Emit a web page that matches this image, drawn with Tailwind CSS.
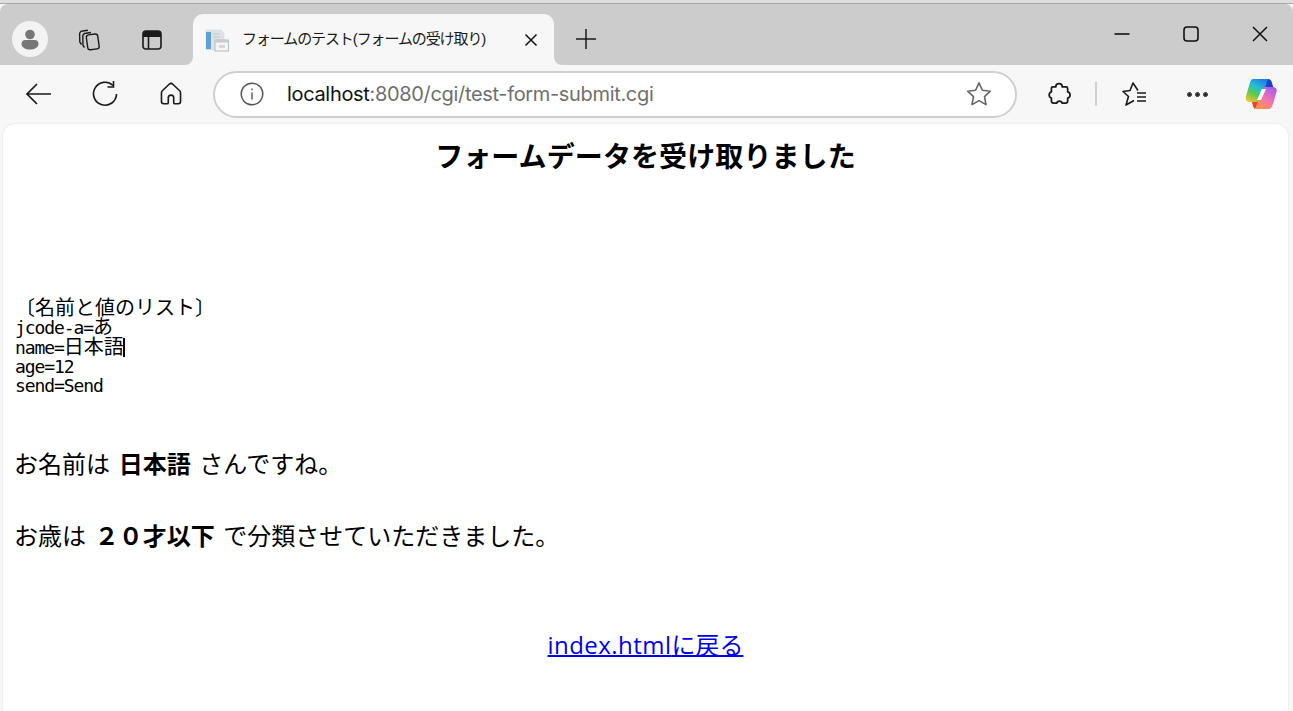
<!DOCTYPE html>
<html lang="ja">

<head>
    <meta charset="UTF-8">
    <title>フォームのテスト(フォームの受け取り)</title>
    <script src="https://cdn.jsdelivr.net/npm/@tailwindcss/browser@4"></script>
</head>

<body class="h-screen overflow-hidden bg-[#f7f7f7] font-['Liberation_Sans','Noto_Sans_CJK_JP',sans-serif]">
    <div class="flex h-[711px] flex-col">
        <!-- desktop sliver above the window -->
        <div class="h-[4px] border-b border-[#a8a8a8] bg-[#dedede]"></div>

        <!-- tab strip -->
        <div class="flex h-[61px] items-end rounded-t-[8px] bg-[#cccccc] pl-[12px]">
            <div class="mb-[8px] flex h-[36px] w-[36px] items-center justify-center rounded-full bg-[#f3f3f3]">
                <svg width="24" height="24" viewBox="0 0 24 24" fill="#777777">
                    <circle cx="12" cy="7.5" r="4.8" />
                    <path d="M3.5 17a4 4 0 0 1 4-4h9a4 4 0 0 1 4 4v0c0 3.500-4 5.500-8.500 5.500S3.500 20.500 3.500 17z" />
                </svg>
            </div>
            <div class="mb-[13px] ml-[29px] h-[24px] w-[24px]">
                <svg width="24" height="24" viewBox="0 0 24 24" fill="none" stroke="#1a1a1a" stroke-width="1.400">
                    <rect x="10" y="6.500" width="11.500" height="15" rx="2.500" transform="rotate(-8 15 14)" />
                    <path d="M7.500 19.500 6 17.500 5.800 8.500a3 3 0 0 1 3-3.200L14 4.500" />
                    <path d="M4.500 16.500 2.800 14 2.600 6a3 3 0 0 1 3-3L11 2.300" />
                </svg>
            </div>
            <div class="mb-[13px] ml-[39px] h-[24px] w-[24px]">
                <svg width="24" height="24" viewBox="0 0 24 24">
                    <rect x="3" y="3" width="18" height="18" rx="3" fill="none" stroke="#1a1a1a" stroke-width="1.600" />
                    <path d="M3 6a3 3 0 0 1 3-3h12a3 3 0 0 1 3 3v3H3z" fill="#1a1a1a" />
                    <path d="M8.500 8v13" stroke="#1a1a1a" stroke-width="1.600" />
                </svg>
            </div>

            <!-- active tab -->
            <div class="relative ml-[29px] flex h-[51px] w-[361px] items-center rounded-t-[10px] bg-[#f7f7f7] pl-[12px]">
                <svg class="absolute bottom-0 left-[-8px]" width="8" height="8" viewBox="0 0 8 8">
                    <path d="M8 0v8H0a8 8 0 0 0 8-8z" fill="#f7f7f7" />
                </svg>
                <svg class="absolute bottom-0 right-[-8px]" width="8" height="8" viewBox="0 0 8 8">
                    <path d="M0 0v8h8a8 8 0 0 1-8-8z" fill="#f7f7f7" />
                </svg>
                <svg width="24" height="24" viewBox="0 0 24 24">
                    <path d="M1 2h15l3 3v17H1z" fill="#dfe3e7" stroke="#cfd4d9" stroke-width="0.500" />
                    <rect x="1" y="4" width="5" height="17" fill="#5f9fd6" />
                    <path d="M8 6h7M8 9h7" stroke="#c3c9cf" />
                    <rect x="10" y="12" width="13.500" height="11" fill="#f4f5f6" stroke="#b5bcc2" />
                    <rect x="10" y="12" width="13.500" height="2.500" fill="#c5cbd0" />
                    <rect x="14" y="17" width="6" height="3" fill="#d2d7db" />
                </svg>
                <span class="ml-[13px] whitespace-nowrap text-[15px] tracking-[-1.1px] text-[#1a1a1a]">フォームのテスト(フォームの受け取り)</span>
                <svg class="ml-auto mr-[15px]" width="16" height="16" viewBox="0 0 16 16" stroke="#111111" stroke-width="1.500">
                    <path d="M2.500 2.500l11 11M13.500 2.500l-11 11" />
                </svg>
            </div>

            <svg class="mb-[14px] ml-[20px]" width="24" height="24" viewBox="0 0 24 24" stroke="#1a1a1a" stroke-width="1.500">
                <path d="M12 2v20M2 12h20" />
            </svg>

            <!-- window buttons -->
            <div class="mb-[22px] ml-auto flex items-center pr-[24px]">
                <svg width="18" height="18" viewBox="0 0 18 18" stroke="#111111" stroke-width="1.600">
                    <path d="M1.500 9h15" />
                </svg>
                <svg class="ml-[51px]" width="18" height="18" viewBox="0 0 18 18" fill="none" stroke="#111111" stroke-width="1.600">
                    <rect x="2" y="2" width="14" height="14" rx="3" />
                </svg>
                <svg class="ml-[51px]" width="18" height="18" viewBox="0 0 18 18" stroke="#111111" stroke-width="1.500">
                    <path d="M2 2l14 14M16 2L2 16" />
                </svg>
            </div>
        </div>

        <!-- toolbar -->
        <div class="flex h-[59px] items-center bg-[#f7f7f7] pb-[1px]">
            <svg class="ml-[25px]" width="28" height="28" viewBox="0 0 28 28" fill="none" stroke="#1a1a1a" stroke-width="1.700">
                <path d="M2 14h24M12 4 2 14l10 10" />
            </svg>
            <svg class="ml-[38px]" width="28" height="28" viewBox="0 0 28 28" fill="none" stroke="#1a1a1a" stroke-width="1.600">
                <path d="M22 5.500a11.500 11.500 0 1 0 3.500 8.500" />
                <path d="M22.500 1v6h-6" />
            </svg>
            <svg class="ml-[39px]" width="26" height="26" viewBox="0 0 24 24" fill="none" stroke="#1a1a1a" stroke-width="1.500" stroke-linejoin="round">
                <path d="M10.300 3a2.500 2.500 0 0 1 3.400 0l6.300 6a2.500 2.500 0 0 1 .8 1.800V19a2 2 0 0 1-2 2h-3.300a1 1 0 0 1-1-1v-4.500a2.500 2.500 0 0 0-5 0V20a1 1 0 0 1-1 1H5.200a2 2 0 0 1-2-2v-8.200A2.500 2.500 0 0 1 4 9z" />
            </svg>

            <!-- address bar -->
            <div class="ml-[29px] flex h-[47px] w-[804px] items-center rounded-full border-2 border-[#cfcfcf] bg-white pl-[24px] pr-[22px]">
                <svg width="26" height="26" viewBox="0 0 26 26" fill="none" stroke="#555555" stroke-width="1.400">
                    <circle cx="13" cy="13" r="10.800" />
                    <path d="M13 11.500v7M13 7.500v1.800" />
                </svg>
                <span class="ml-[22px] whitespace-nowrap font-['Inter','Liberation_Sans',sans-serif] text-[20px] tracking-[-0.33px] text-[#6f6f6f]"><span class="text-[#111111]">localhost</span>:8080/cgi/test-form-submit.cgi</span>
                <svg class="ml-auto" width="28" height="28" viewBox="0 0 24 24" fill="none" stroke="#666666" stroke-width="1.400" stroke-linejoin="round">
                    <path d="M12 2.500l2.900 6.300 6.800.8-5 4.700 1.300 6.800-6-3.400-6 3.400 1.300-6.800-5-4.700 6.800-.8z" />
                </svg>
            </div>

            <svg class="ml-[29px]" width="26" height="26" viewBox="0 0 24 24" fill="none" stroke="#1a1a1a" stroke-width="1.600" stroke-linejoin="round">
                <path d="M9 5.500a3 3 0 0 1 6 0h3.500a1.500 1.500 0 0 1 1.500 1.500v3a3 3 0 0 1 0 5.800v2.700a2 2 0 0 1-2 2h-3a2.700 2.700 0 0 0-5.200 0H7a2 2 0 0 1-2-2v-2.800a3 3 0 0 1 0-5.700V7a1.500 1.500 0 0 1 1.500-1.500z" />
            </svg>
            <div class="ml-[23px] h-[24px] w-[2px] bg-[#d0d0d0]"></div>
            <svg class="ml-[24px]" width="26" height="26" viewBox="0 0 26 26" fill="none" stroke="#1a1a1a" stroke-width="1.600" stroke-linejoin="round">
                <path d="M17 9.500 12 2l-3 7.500-7 1 5.500 5L5 24l8-4.500" />
                <path d="M16 12h9M16 16h9M16 20h9" />
            </svg>
            <div class="ml-[41px] flex gap-[5px]">
                <div class="h-[3px] w-[3px] rounded-full bg-[#1a1a1a] outline outline-[0.5px] outline-[#1a1a1a]"></div>
                <div class="h-[3px] w-[3px] rounded-full bg-[#1a1a1a] outline outline-[0.5px] outline-[#1a1a1a]"></div>
                <div class="h-[3px] w-[3px] rounded-full bg-[#1a1a1a] outline outline-[0.5px] outline-[#1a1a1a]"></div>
            </div>
            <svg class="ml-[37px]" width="34" height="32" viewBox="0 0 34 32">
                <defs>
                    <linearGradient id="copilotLeft" x1="0.700" y1="0" x2="0.200" y2="1">
                        <stop offset="0" stop-color="#1f7fe8" />
                        <stop offset="0.350" stop-color="#22bfd8" />
                        <stop offset="0.650" stop-color="#5cc94a" />
                        <stop offset="1" stop-color="#f2c430" />
                    </linearGradient>
                    <linearGradient id="copilotRight" x1="0.800" y1="0" x2="0.200" y2="1">
                        <stop offset="0" stop-color="#a35cf0" />
                        <stop offset="0.500" stop-color="#ee72b8" />
                        <stop offset="1" stop-color="#ff9340" />
                    </linearGradient>
                </defs>
                <path d="M20 1h4c2.500 0 3.500 2 4 4l1.500 5H20z" fill="#1840c8" />
                <path d="M9 1h15l-8 23H6c-3.500 0-5-3-4-6L5.500 6C6.500 2.500 7.500 1 9 1z" fill="url(#copilotLeft)" />
                <path d="M8 24h7l-2 7h-1c-2.500 0-3-3-4-7z" fill="#e8432e" />
                <path d="M25 31H11l9-22h8.500c3.500 0 5 2.500 4 5L29 26c-1 3.500-2.500 5-4 5z" fill="url(#copilotRight)" />
                <path d="M18 11h4l-5 11h-4z" fill="#ffffff" />
            </svg>
        </div>

        <!-- page -->
        <div class="ml-[3px] mr-[5px] flex-1 rounded-t-[12px] bg-white px-[11px] pt-[14px] text-[24px] text-black shadow-[0_0_2px_rgba(0,0,0,0.12)]">
            <h2 class="text-center text-[28px] leading-[40px] font-bold tracking-[0.1px]">フォームデータを受け取りました</h2>
            <pre class="mt-[121px] pl-[1px] font-['DejaVu_Sans_Mono','Noto_Sans_CJK_JP',monospace] text-[18px] leading-[19.25px] tracking-[-1.1px]"><span class="text-[20px] tracking-normal">〔名前と値のリスト〕</span>
jcode-a=<span class="text-[20px] tracking-normal">あ</span>
name=<span class="text-[20px] tracking-normal">日本語</span><span class="ml-[-1px] inline-block h-[19px] w-[2px] bg-black align-[-3px]"></span>
age=12
send=Send</pre>
            <p class="mt-[54px] leading-[32px] [word-spacing:2px]">お名前は <b>日本語</b> さんですね。</p>
            <p class="mt-[40px] leading-[32px] [word-spacing:2px]">お歳は <b>２０才以下</b> で分類させていただきました。</p>
            <p class="mt-[76px] text-center leading-[32px]"><a href="#" class="text-[#0000ee] underline decoration-2"><span class="font-['Open_Sans'] tracking-[0.45px]">index.html</span>に戻る</a></p>
        </div>
    </div>
</body>

</html>
